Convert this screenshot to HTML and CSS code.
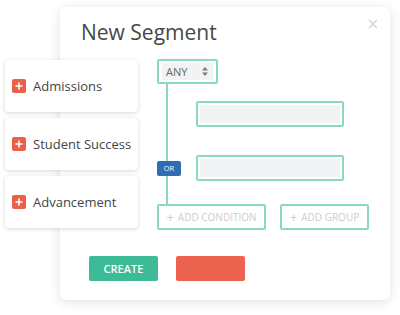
FILE: index.html
```html
<!DOCTYPE html>
<html>
<head>
<meta charset="utf-8">
<link rel="stylesheet" href="styles.css">
</head>
<body>
<div class="scene">
  <div class="modal">
    <h1 class="title">New Segment</h1>
    <svg class="close" width="10" height="10" viewBox="0 0 10 10"><path d="M1 1L9 9M9 1L1 9" stroke="#cfcfcf" stroke-width="1.2" fill="none"/></svg>
    <div class="builder">
      <div class="select"><div class="select-inner"><span>ANY</span>
        <svg width="6" height="9" viewBox="0 0 6 9"><path d="M3 0L6 3.5H0Z M3 9L6 5.5H0Z" fill="#7a7a7a"/></svg></div></div>
      <div class="group-body">
        <div class="cond-row">
          <div class="slot"></div>
          <div class="input"><div class="input-inner"></div></div>
        </div>
        <div class="cond-row second">
          <div class="slot"><span class="or">OR</span></div>
          <div class="input"><div class="input-inner"></div></div>
        </div>
      </div>
      <div class="add-row">
        <div class="add add-cond"><span class="plus">+</span>ADD CONDITION</div>
        <div class="add add-group"><span class="plus">+</span>ADD GROUP</div>
      </div>
    </div>
    <div class="buttons">
      <div class="btn create">CREATE</div>
      <div class="btn cancel"></div>
    </div>
  </div>
  <div class="cards">
    <div class="card"><span class="icon"><svg width="14" height="14" viewBox="0 0 14 14"><path d="M7 3.5V10.5M3.5 7H10.5" stroke="#fff" stroke-width="1.6"/></svg></span>Admissions</div>
    <div class="card"><span class="icon"><svg width="14" height="14" viewBox="0 0 14 14"><path d="M7 3.5V10.5M3.5 7H10.5" stroke="#fff" stroke-width="1.6"/></svg></span>Student Success</div>
    <div class="card"><span class="icon"><svg width="14" height="14" viewBox="0 0 14 14"><path d="M7 3.5V10.5M3.5 7H10.5" stroke="#fff" stroke-width="1.6"/></svg></span>Advancement</div>
  </div>
</div>
</body>
</html>
```

FILE: styles.css
```css
* { box-sizing: border-box; }
html, body { margin: 0; padding: 0; background: #fff; }
body { font-family: "Open Sans", "Liberation Sans", sans-serif; }

.scene { position: relative; width: 400px; height: 315px; padding: 7px 0 0 60px; }

.modal {
  position: relative;
  width: 330px;
  height: 293px;
  background: #fff;
  border-radius: 6px;
  box-shadow: 0 2px 12px rgba(0,0,0,0.12);
  padding: 10px 0 0 0;
  display: flex;
  flex-direction: column;
}

.title {
  margin: 0 0 0 21px;
  font-size: 21px;
  line-height: 30px;
  font-weight: 500;
  color: #474747;
}

.close { position: absolute; top: 12px; right: 12px; }

.builder { margin: 12px 0 0 97px; display: flex; flex-direction: column; }

.select {
  width: 61px; height: 25px;
  border: 2px solid #8bd8c0;
  border-radius: 2px;
  padding: 2px 3px;
}
.select-inner {
  height: 100%;
  background: #f1f3f5;
  display: flex; align-items: center; justify-content: space-between;
  padding: 0 5px 0 4px;
  font-size: 11px; color: #666;
}

.group-body {
  margin-left: 9px;
  border-left: 2px solid #8bd8c0;
  padding: 17px 0 23px 0;
  display: flex; flex-direction: column; gap: 28px;
}
.cond-row { display: flex; align-items: center; margin-left: -11px; }
.slot { width: 39px; display: flex; align-items: center; }
.or {
  width: 24px; height: 15px;
  background: #2f6cb3;
  border-radius: 2px;
  color: #fff; font-size: 7.5px;
  display: flex; align-items: center; justify-content: center;
}
.input {
  width: 148px; height: 26px;
  border: 2px solid #8bd8c0;
  border-radius: 2px;
  padding: 2px 2px;
}
.input-inner { height: 100%; background: #f1f3f5; }

.add-row { display: flex; gap: 14px; }
.add {
  height: 26px;
  border: 2px solid #8bd8c0;
  border-radius: 2px;
  display: flex; align-items: center; justify-content: center;
  font-size: 10px; color: #cdcdcd;
}
.add-cond { width: 109px; }
.add-group { width: 89px; }
.plus { font-size: 13px; margin-right: 4px; line-height: 1; }

.buttons { display: flex; gap: 18px; margin: 26px 0 0 29px; }
.btn {
  width: 69px; height: 25px; border-radius: 2px;
  display: flex; align-items: center; justify-content: center;
  color: #fff; font-size: 11px; font-weight: 600;
}
.create { background: #3dba96; }
.cancel { background: #ec6450; }

.cards {
  position: absolute; left: 5px; top: 60px;
  display: flex; flex-direction: column; gap: 6px;
}
.card {
  width: 133px; height: 52px;
  background: #fff;
  border-radius: 4px;
  box-shadow: 0 1px 4px rgba(0,0,0,0.16);
  display: flex; align-items: center;
  padding-left: 7px;
  font-size: 13px; font-weight: 500; color: #444;
}
.icon {
  width: 14px; height: 14px; border-radius: 2px;
  background: #e9604b;
  margin-right: 7px;
  display: flex;
}
```
